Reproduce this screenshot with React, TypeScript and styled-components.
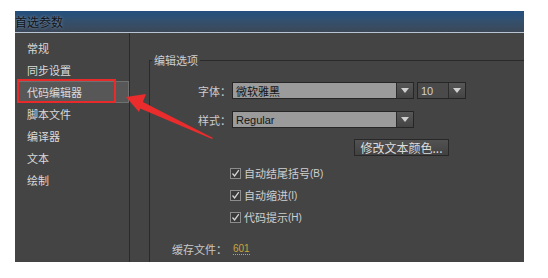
import React from 'react';
import styled, {createGlobalStyle} from 'styled-components';

const GlobalStyle = createGlobalStyle`
  html, body {
    margin: 0;
    padding: 0;
    background: #ffffff;
  }

  body {
    font-family: "Noto Sans CJK SC", "Liberation Sans", sans-serif;
  }
`;

const Window = styled.div`
  position: relative;
  width: 509px;
  height: 251px;
  margin: 11px 0 0 15px;
  background: #444444;
  display: flex;
  flex-direction: column;
  overflow: hidden;
`;

const TitleBar = styled.div`
  height: 21px;
  border-bottom: 1px solid #b9c4d2;
  background: linear-gradient(180deg, #24507f 0%, #33506e 45%, #3c4858 100%);
  display: flex;
  align-items: center;
  font-size: 12px;
  color: #101418;
  text-shadow: 0 0 3px rgba(200, 215, 235, 0.55);
`;

const Body = styled.div`
  flex: 1;
  display: flex;
`;

const Sidebar = styled.ul`
  list-style: none;
  margin: 0;
  padding: 4px 0 0;
  width: 114px;
  border-right: 1px solid #2a2a2a;
`;

const NavItem = styled.li<{ $active?: boolean }>`
  height: 22px;
  box-sizing: border-box;
  margin: 0 0 0 2px;
  padding-left: 9px;
  display: flex;
  align-items: center;
  font-size: 11px;
  color: #dadada;
  background: ${p => (p.$active ? '#575757' : 'transparent')};
  border: 1px solid ${p => (p.$active ? '#707070' : 'transparent')};
`;

const Main = styled.div`
  flex: 1;
  padding: 21px 0 0 19px;
`;

const Group = styled.fieldset`
  margin: 0;
  padding: 0;
  min-width: 0;
  height: 100%;
  box-sizing: border-box;
  border: 1px solid #2a2a2a;
  border-right: none;
  border-bottom: none;
`;

const Legend = styled.legend`
  margin-left: 2px;
  padding: 0 2px;
  font-size: 11px;
  line-height: 13px;
  color: #cfcfcf;
`;

const FormRow = styled.div<{ $top: number }>`
  display: flex;
  align-items: center;
  height: 17px;
  margin-top: ${p => p.$top}px;
`;

const Label = styled.span`
  width: 81px;
  text-align: right;
  font-size: 11px;
  color: #cccccc;
`;

const Combo = styled.div<{ $width: number; $dark?: boolean }>`
  display: flex;
  height: 17px;
  width: ${p => p.$width}px;
  box-sizing: border-box;
  border: 1px solid #262626;
  margin-left: ${p => (p.$dark ? 3 : 1)}px;
  background: ${p => (p.$dark ? '#4a4a4a' : '#9b9b9b')};
`;

const ComboValue = styled.span<{ $dark?: boolean }>`
  flex: 1;
  display: flex;
  align-items: center;
  padding-left: 3px;
  font-size: 11px;
  color: ${p => (p.$dark ? '#cfcfcf' : '#151515')};
  font-family: "Liberation Sans", "Noto Sans CJK SC", sans-serif;
`;

const ComboArrow = styled.span`
  width: 16px;
  display: flex;
  align-items: center;
  justify-content: center;
  border-left: 1px solid #2c2c2c;
  background: linear-gradient(180deg, #575757, #444444);
`;

const Triangle = styled.span`
  width: 0;
  height: 0;
  border-left: 4px solid transparent;
  border-right: 4px solid transparent;
  border-top: 5px solid #d0d0d0;
`;

const ColorButton = styled.button`
  margin: 11px 0 0 204px;
  width: 95px;
  height: 17px;
  padding: 0;
  box-sizing: border-box;
  display: block;
  border: 1px solid #282828;
  background: linear-gradient(180deg, #525252, #414141);
  color: #dcdcdc;
  font-family: "Noto Sans CJK SC", "Liberation Sans", sans-serif;
  font-size: 12px;
  line-height: 14px;
`;

const CheckList = styled.div`
  margin-top: 6px;
  padding-left: 80px;
`;

const CheckRow = styled.label`
  display: flex;
  align-items: center;
  height: 22px;
  font-size: 11px;
  color: #cfcfcf;
`;

const CheckBox = styled.span`
  width: 11px;
  height: 11px;
  box-sizing: border-box;
  border: 1px solid #8c8c8c;
  background: #3a3a3a;
  margin-right: 3px;
  display: flex;
  align-items: center;
  justify-content: center;
`;

const Hotkey = styled.span`
  font-family: "Liberation Sans", sans-serif;
  font-size: 10px;
`;

const CacheRow = styled.div`
  display: flex;
  align-items: center;
  margin-top: 13px;
  padding-left: 22px;
  font-size: 11px;
  color: #c8c8c8;
`;

const CacheValue = styled.span`
  margin-left: 6px;
  color: #c9a43e;
  font-family: "Liberation Sans", sans-serif;
  font-size: 10px;
  border-bottom: 1px dotted #c9a43e;
  line-height: 11px;
`;

const Annotation = styled.svg`
  position: absolute;
  left: 0;
  top: 0;
  pointer-events: none;
`;

const navItems = ['常规', '同步设置', '代码编辑器', '脚本文件', '编译器', '文本', '绘制'];

const checks = [
  {text: '自动结尾括号', key: '(B)'},
  {text: '自动缩进', key: '(I)'},
  {text: '代码提示', key: '(H)'},
];

const Check = () => (
  <CheckBox>
    <svg width="9" height="9" viewBox="0 0 9 9">
      <path d="M1.5 4.5 L3.6 7 L7.8 1.2" fill="none" stroke="#d4d4d4" strokeWidth="1.3"/>
    </svg>
  </CheckBox>
);

const App: React.FC = () => {
  return (
    <>
      <GlobalStyle/>
      <Window>
        <TitleBar>首选参数</TitleBar>
        <Body>
          <Sidebar>
            {navItems.map(item => (
              <NavItem key={item} $active={item === '代码编辑器'}>{item}</NavItem>
            ))}
          </Sidebar>
          <Main>
            <Group>
              <Legend>编辑选项</Legend>
              <FormRow $top={15}>
                <Label>字体：</Label>
                <Combo $width={182}>
                  <ComboValue>微软雅黑</ComboValue>
                  <ComboArrow><Triangle/></ComboArrow>
                </Combo>
                <Combo $width={49} $dark>
                  <ComboValue $dark>10</ComboValue>
                  <ComboArrow><Triangle/></ComboArrow>
                </Combo>
              </FormRow>
              <FormRow $top={12}>
                <Label>样式：</Label>
                <Combo $width={182}>
                  <ComboValue>Regular</ComboValue>
                  <ComboArrow><Triangle/></ComboArrow>
                </Combo>
              </FormRow>
              <ColorButton>修改文本颜色...</ColorButton>
              <CheckList>
                {checks.map(c => (
                  <CheckRow key={c.key}>
                    <Check/>
                    {c.text}<Hotkey>{c.key}</Hotkey>
                  </CheckRow>
                ))}
              </CheckList>
              <CacheRow>
                缓存文件：<CacheValue>601</CacheValue>
              </CacheRow>
            </Group>
          </Main>
        </Body>
        <Annotation width="509" height="251">
          <rect x="3" y="69" width="97" height="22" fill="none" stroke="#e82a2a" strokeWidth="2"/>
          <polygon points="111,86 131,83 124,101" fill="#ea2c2c"/>
          <polygon points="126,90 198,127 197,128 124,97" fill="#ea2c2c"/>
        </Annotation>
      </Window>
    </>
  );
};

export default App;
